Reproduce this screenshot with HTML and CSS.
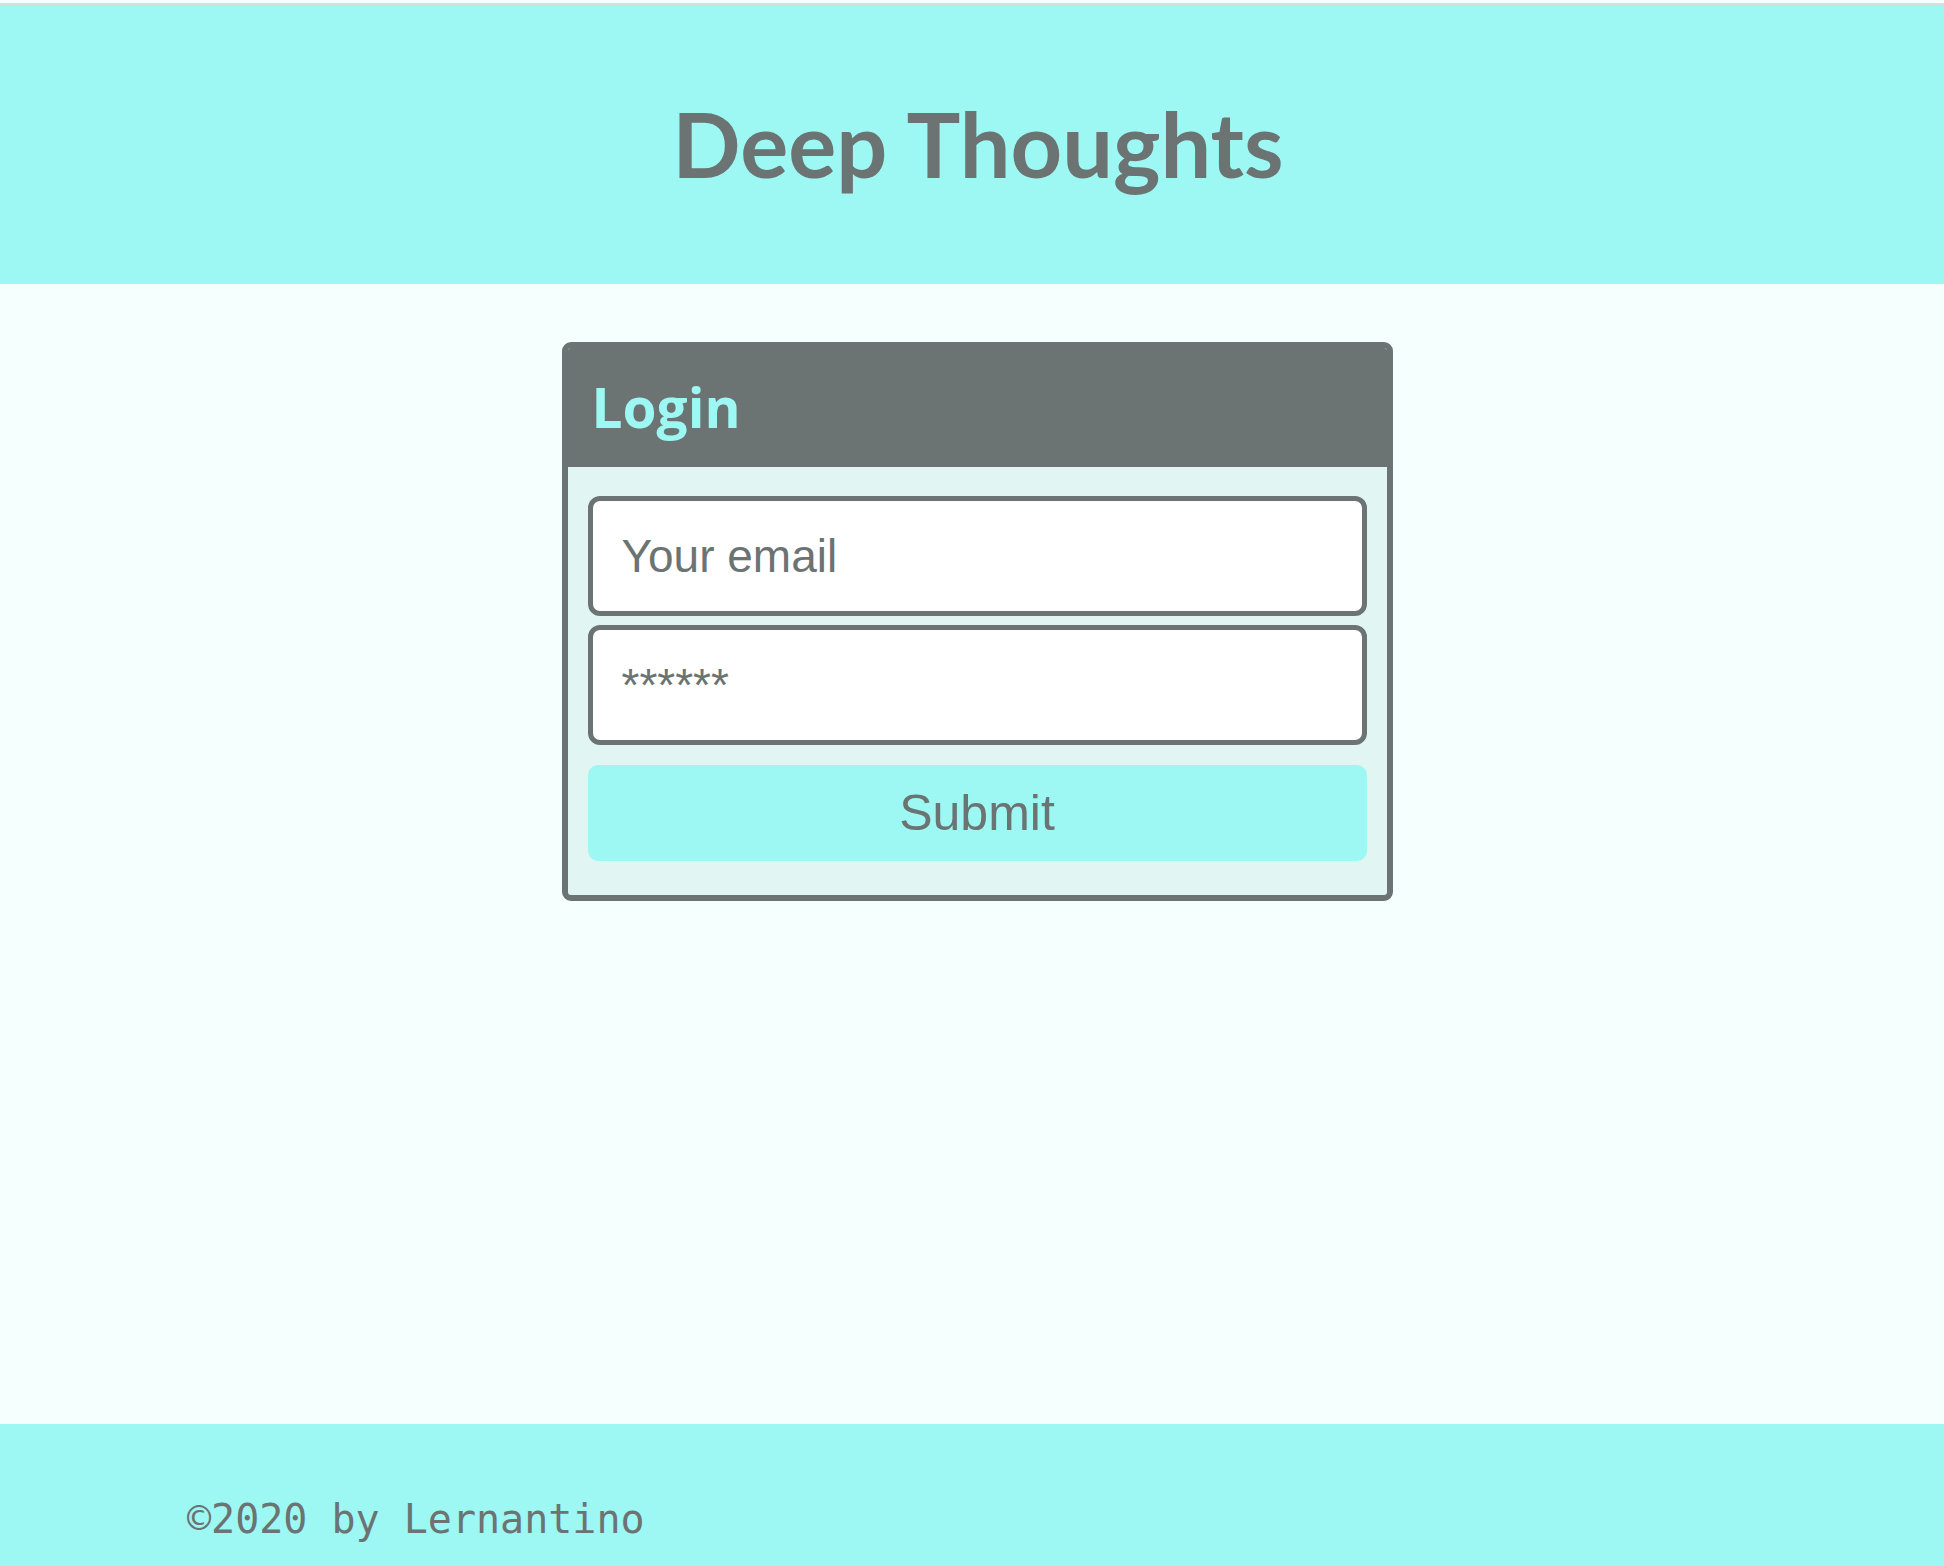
FILE: index.html
```html
<!DOCTYPE html>
<html lang="en">
<head>
<meta charset="utf-8">
<title>Deep Thoughts</title>
<link rel="stylesheet" href="styles.css">
</head>
<body>
<div class="page">
  <header class="site-header">
    <h1 class="site-title">Deep Thoughts</h1>
  </header>
  <main class="site-main">
    <section class="card">
      <h4 class="card-header">Login</h4>
      <form class="card-body">
        <input class="form-input" type="email" placeholder="Your email">
        <input class="form-input form-input-pw" type="password" placeholder="******">
        <button class="btn" type="button">Submit</button>
      </form>
    </section>
  </main>
  <footer class="site-footer">
    <div class="footer-text">©2020 by Lernantino</div>
  </footer>
</div>
</body>
</html>
```

FILE: styles.css
```css
html, body {
  margin: 0;
  padding: 0;
}
body {
  background: #f5fffd;
  font-family: "Liberation Sans", Arial, sans-serif;
  color: #6b7373;
}
.page {
  min-height: 100vh;
  display: flex;
  flex-direction: column;
}
.site-header {
  margin-top: 3px;
  border-top: 3px solid #d9dddd;
  background: #9df7f3;
  height: 278px;
  display: flex;
  align-items: center;
  justify-content: center;
  padding-left: 12px;
}
.site-title {
  margin: 0 0 4px;
  font-family: Lato, "Open Sans", sans-serif;
  font-weight: 700;
  font-size: 90px;
  color: #6b7373;
  line-height: 1;
}
.site-main {
  flex: 1;
  padding-left: 10px;
}
.card {
  width: 831px;
  box-sizing: border-box;
  margin: 58px auto 0;
  border: 6px solid #6b7373;
  border-radius: 9px;
  background: #e1f5f3;
  overflow: hidden;
}
.card-header {
  margin: 0;
  background: #6b7373;
  color: #9df7f3;
  font-family: "Open Sans", sans-serif;
  font-weight: 700;
  font-size: 55px;
  padding: 21px 24px 23px;
  height: 75px;
  line-height: 75px;
  box-sizing: content-box;
}
.card-body {
  display: flex;
  flex-direction: column;
  padding: 29px 20px 34px 20px;
}
.form-input {
  box-sizing: border-box;
  height: 120px;
  border: 5px solid #6b7373;
  border-radius: 12px;
  background: #ffffff;
  padding: 0 29px;
  font-family: "Liberation Sans", Arial, sans-serif;
  font-size: 46px;
  color: #6b7373;
  outline: none;
}
.form-input::placeholder {
  color: #6b7373;
  opacity: 1;
}
.form-input-pw {
  margin-top: 9px;
}
.btn {
  margin-top: 20px;
  height: 96px;
  border: none;
  border-radius: 10px;
  background: #9df7f3;
  color: #6b7373;
  font-family: "Liberation Sans", Arial, sans-serif;
  font-size: 50px;
  cursor: pointer;
}
.site-footer {
  background: #9df7f3;
  padding: 72px 0 23px 187px;
}
.footer-text {
  font-family: "DejaVu Sans Mono", monospace;
  font-size: 40px;
  line-height: 47px;
  color: #6b7373;
}
```
